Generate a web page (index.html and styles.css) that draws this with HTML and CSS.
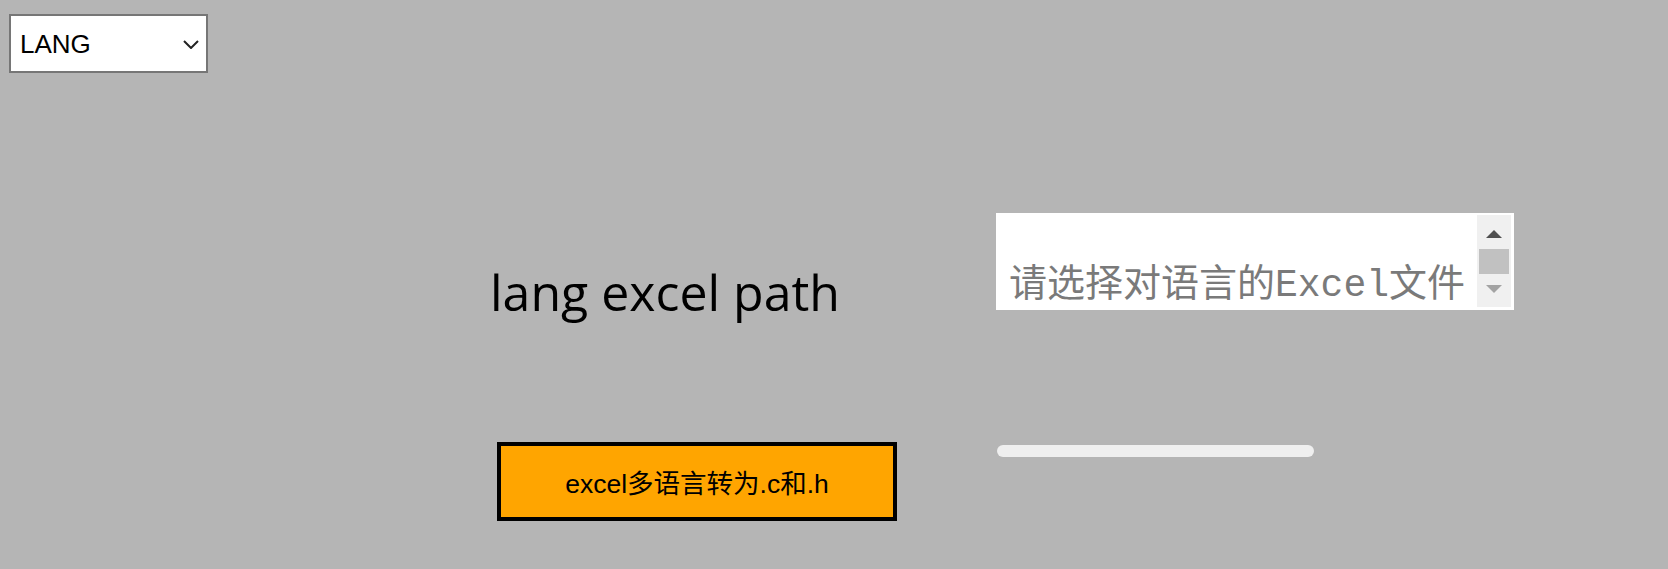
FILE: index.html
```html
<!DOCTYPE html>
<html lang="zh">
<head>
<meta charset="utf-8">
<title>excel多语言转为.c和.h</title>
<link rel="stylesheet" href="styles.css">
</head>
<body>
  <header class="topbar">
    <div class="lang-select">
      <select class="lang-select__control">
        <option>LANG</option>
        <option>中文</option>
        <option>English</option>
      </select>
      <svg class="lang-select__chevron" width="16" height="9" viewBox="0 0 16 9" aria-hidden="true">
        <path d="M1 1 L8 8 L15 1" fill="none" stroke="#222" stroke-width="2"/>
      </svg>
    </div>
  </header>

  <main class="form">
    <div class="form__label">lang excel path</div>
    <div class="path-box">
      <textarea class="path-box__input" placeholder="请选择对语言的Excel文件"></textarea>
      <div class="scrollbar">
        <span class="scrollbar__up"></span>
        <span class="scrollbar__thumb"></span>
        <span class="scrollbar__down"></span>
      </div>
    </div>
    <div class="form__action">
      <button class="convert-btn">excel多语言转为.c和.h</button>
    </div>
    <div class="form__progress">
      <div class="progress"></div>
    </div>
  </main>
</body>
</html>
```
FILE: styles.css
```css
html, body {
  margin: 0;
  padding: 0;
  background: #b5b5b5;
}

body {
  font-family: "Liberation Sans", "Noto Sans CJK SC", sans-serif;
  width: 1668px;
  height: 569px;
  overflow: hidden;
}

.topbar {
  padding: 14px 0 0 9px;
  display: flex;
}

.lang-select {
  position: relative;
  width: 199px;
  height: 59px;
}

.lang-select__control {
  appearance: none;
  -webkit-appearance: none;
  box-sizing: border-box;
  width: 100%;
  height: 100%;
  margin: 0;
  border: 2px solid #767676;
  border-radius: 0;
  background: #fff;
  color: #000;
  font-family: "Liberation Sans", sans-serif;
  font-size: 26px;
  padding: 0 0 0 9px;
  outline: none;
}

.lang-select__chevron {
  position: absolute;
  left: 174px;
  top: 26px;
  pointer-events: none;
}

.form {
  display: grid;
  grid-template-columns: 996px 518px;
  grid-template-rows: 97px auto;
  row-gap: 132px;
  margin-top: 140px;
}

.form__label {
  padding: 54px 0 0 490px;
  font-family: "Open Sans", sans-serif;
  font-size: 50px;
  line-height: 1;
  color: #000;
  white-space: nowrap;
}

.path-box {
  display: flex;
  background: #fff;
  padding: 2px 3px 3px 0;
  box-sizing: border-box;
  height: 97px;
}

.path-box__input {
  flex: 1;
  border: none;
  outline: none;
  resize: none;
  overflow: hidden;
  background: transparent;
  margin: 0;
  padding: 48px 0 0 13px;
  font-family: "Liberation Mono", "Noto Sans CJK SC", monospace;
  font-size: 38px;
  line-height: 46px;
  color: #000;
}

.path-box__input::placeholder {
  color: #7a7a7a;
}

.scrollbar {
  width: 34px;
  background: #f0f0f0;
  display: flex;
  flex-direction: column;
  align-items: center;
}

.scrollbar__up {
  width: 0;
  height: 0;
  margin-top: 15px;
  border-left: 8px solid transparent;
  border-right: 8px solid transparent;
  border-bottom: 8px solid #505050;
}

.scrollbar__thumb {
  width: 30px;
  height: 25px;
  margin-top: 11px;
  background: #c1c1c1;
}

.scrollbar__down {
  width: 0;
  height: 0;
  margin-top: 11px;
  border-left: 8px solid transparent;
  border-right: 8px solid transparent;
  border-top: 8px solid #a3a3a3;
}

.form__action {
  padding-left: 497px;
}

.convert-btn {
  box-sizing: border-box;
  width: 400px;
  height: 79px;
  border: 4px solid #000;
  background: #ffa500;
  color: #000;
  font-family: "Liberation Sans", "Noto Sans CJK SC", sans-serif;
  font-size: 26.5px;
  padding: 0;
  margin: 0;
}

.form__progress {
  padding: 3px 0 0 1px;
}

.progress {
  width: 317px;
  height: 12px;
  border-radius: 6px;
  background: #efefef;
}
```
